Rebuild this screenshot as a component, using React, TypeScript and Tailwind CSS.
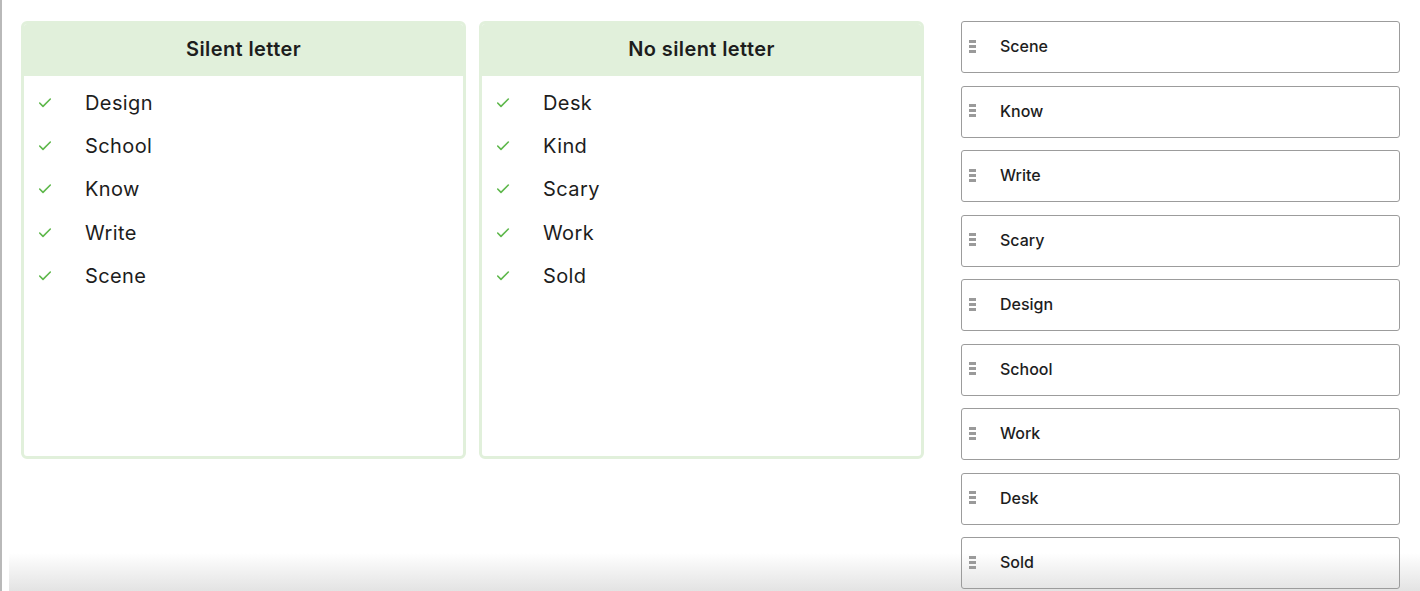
import { Check } from 'lucide-react';

const silent = ['Design', 'School', 'Know', 'Write', 'Scene'];
const noSilent = ['Desk', 'Kind', 'Scary', 'Work', 'Sold'];
const pool = ['Scene', 'Know', 'Write', 'Scary', 'Design', 'School', 'Work', 'Desk', 'Sold'];

function Bucket({ title, items }: { title: string; items: string[] }) {
  return (
    <div className="w-[445px] h-[438px] rounded-[6px] border-[3px] border-[#e1f0db] bg-white overflow-hidden">
      <div className="h-[52px] pb-[2px] bg-[#e1f0db] flex items-center justify-center text-[20px] font-semibold tracking-[0.4px] text-[#1d1d1d]">
        {title}
      </div>
      <ul className="pt-[5px]">
        {items.map((item) => (
          <li key={item} className="h-[43.3px] flex items-center">
            <Check className="ml-[13px] w-[16px] h-[16px] text-[#5fb84c]" strokeWidth={2.4} />
            <span className="ml-[32px] text-[20px] tracking-[0.4px] text-[#1d1d1d]">{item}</span>
          </li>
        ))}
      </ul>
    </div>
  );
}

function Grip() {
  return (
    <div className="flex flex-col gap-[2px] ml-[7px] mb-[2px]">
      <span className="block w-[7px] h-[3px] bg-[#9a9a9a]" />
      <span className="block w-[7px] h-[3px] bg-[#9a9a9a]" />
      <span className="block w-[7px] h-[3px] bg-[#9a9a9a]" />
    </div>
  );
}

export default function App() {
  return (
    <div
      className="relative w-[1420px] h-[591px] overflow-hidden bg-white border-l-2 border-[#b9b9b9]"
      style={{ fontFamily: 'Inter, "Open Sans", "Liberation Sans", sans-serif' }}
    >
      {/* Bottom fade behind content */}
      <div className="pointer-events-none absolute left-[7px] right-0 bottom-0 h-[38px] bg-gradient-to-b from-white to-[#e3e3e3]" />

      <div className="relative flex pl-[19px] pt-[21px]">
        {/* Buckets */}
        <div className="flex gap-[13px]">
          <Bucket title="Silent letter" items={silent} />
          <Bucket title="No silent letter" items={noSilent} />
        </div>

        {/* Draggable pool */}
        <div className="ml-[37px] flex flex-col gap-[12.5px]">
          {pool.map((word) => (
            <div
              key={word}
              className="w-[439px] h-[52px] shrink-0 rounded-[3px] border border-[#9c9c9c] flex items-center"
            >
              <Grip />
              <span className="ml-[24px] mb-[2px] text-[16px] font-medium text-[#1d1d1d]">{word}</span>
            </div>
          ))}
        </div>
      </div>
    </div>
  );
}
